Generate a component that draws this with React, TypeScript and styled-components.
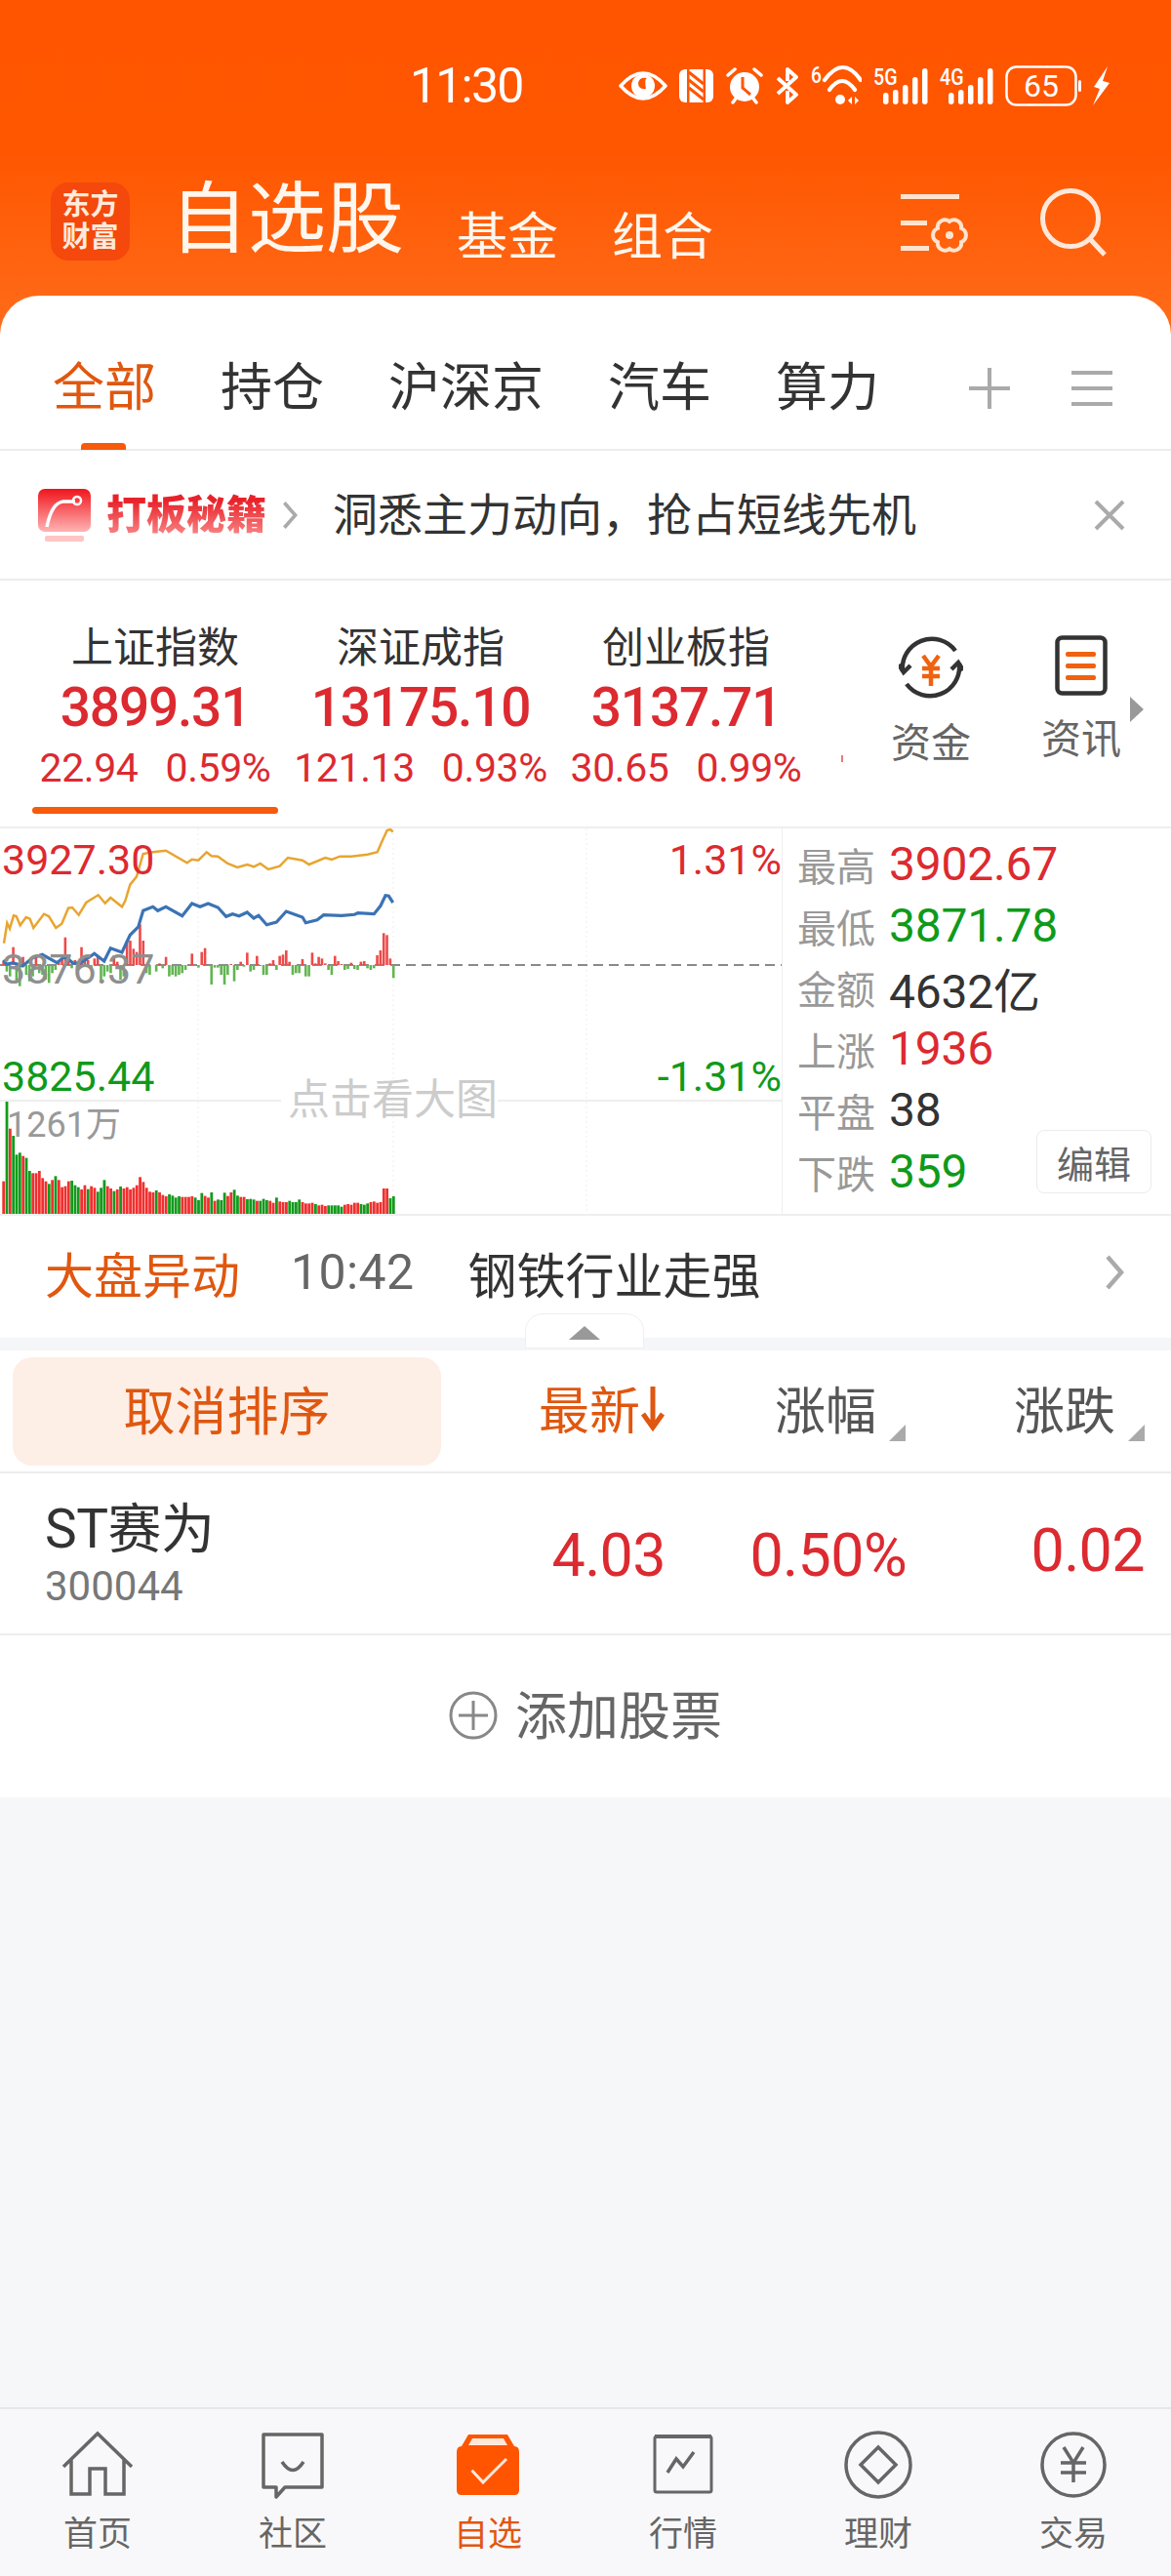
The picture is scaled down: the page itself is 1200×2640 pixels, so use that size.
import React from 'react';
import styled, { createGlobalStyle } from 'styled-components';

const ORANGE = '#e0570f';
const RED = '#dc2a30';
const GREEN = '#0f9a1a';

const GlobalStyle = createGlobalStyle`
  html, body {
    margin: 0;
    padding: 0;
    background: #f6f7f9;
  }
  * {
    box-sizing: border-box;
  }
  body {
    font-family: Roboto, "Noto Sans CJK SC", sans-serif;
  }
`;

const Page = styled.div`
  width: 1200px;
  height: 2640px;
  display: flex;
  flex-direction: column;
  overflow: hidden;
  background: linear-gradient(180deg, #ff5500 0, #ff5600 150px, #ff6c1a 345px) no-repeat;
  background-size: 100% 345px;
`;

const StatusBar = styled.div`
  height: 60px;
  margin-top: 58px;
  padding: 0 63px 0 420px;
  display: flex;
  align-items: center;
  color: #fff;
`;
const Clock = styled.span`
  font-size: 50px;
  line-height: 60px;
  letter-spacing: -1.8px;
`;
const StatusIcons = styled.div`
  margin-left: auto;
  display: flex;
  align-items: center;
  gap: 12px;
`;

const TitleBar = styled.div`
  height: 116px;
  margin-top: 69px;
  padding: 0 66px 0 52px;
  display: flex;
  align-items: flex-start;
  color: #fff6ee;
`;
const Logo = styled.div`
  width: 81px;
  height: 80px;
  border-radius: 18px;
  background: #f4480c;
  color: #ffeadb;
  font-size: 29px;
  font-weight: 700;
  line-height: 33px;
  text-align: center;
  padding-top: 7px;
`;
const Title = styled.div`
  margin-left: 41px;
  font-size: 80px;
  line-height: 76px;
`;
const SubTitle = styled.div<{ $gap: number }>`
  margin-left: ${(p) => p.$gap}px;
  margin-top: 30px;
  font-size: 52px;
  line-height: 54px;
`;
const TitleIcons = styled.div`
  margin-left: auto;
  display: flex;
  align-items: flex-start;
  gap: 72px;
`;

const Panel = styled.div`
  background: #fff;
  border-radius: 40px 40px 0 0;
`;

const TabBar = styled.div`
  height: 159px;
  padding: 32px 60px 0 54px;
  display: flex;
  align-items: center;
  gap: 66px;
  border-bottom: 2px solid #ececec;
`;
const Tab = styled.div<{ $active?: boolean }>`
  position: relative;
  font-size: 53px;
  line-height: 62px;
  color: ${(p) => (p.$active ? ORANGE : '#333')};
  &::after {
    content: '';
    display: ${(p) => (p.$active ? 'block' : 'none')};
    position: absolute;
    left: 29px;
    bottom: -32px;
    width: 46px;
    height: 7px;
    border-radius: 4px 4px 0 0;
    background: #f65a0a;
  }
`;
const TabTools = styled.div`
  margin-left: auto;
  display: flex;
  align-items: center;
  gap: 62px;
`;

const Banner = styled.div`
  height: 133px;
  padding: 0 46px 0 39px;
  display: flex;
  align-items: center;
  border-bottom: 2px solid #ececec;
`;
const BannerBrand = styled.span`
  margin-left: 16px;
  margin-right: 16px;
  font-size: 41px;
  font-weight: 900;
  line-height: 50px;
  background: linear-gradient(180deg, #e8222a 20%, #f98a8a 95%);
  -webkit-background-clip: text;
  background-clip: text;
  color: transparent;
`;
const BannerText = styled.span`
  margin-left: 36px;
  font-size: 46px;
  line-height: 60px;
  color: #333;
`;
const PushRight = styled.span`
  margin-left: auto;
  display: flex;
`;

const IndexSection = styled.div`
  position: relative;
  height: 252px;
  padding-left: 23px;
  display: flex;
  overflow: hidden;
`;
const IndexCard = styled.div`
  width: 272px;
  padding-top: 44px;
  display: flex;
  flex-direction: column;
  align-items: center;
`;
const IndexName = styled.div`
  font-size: 43px;
  line-height: 50px;
  color: #333;
`;
const IndexValue = styled.div`
  font-size: 55px;
  font-weight: 500;
  line-height: 72px;
  letter-spacing: -1.2px;
  color: ${RED};
`;
const IndexChange = styled.div`
  margin-top: 2px;
  display: flex;
  gap: 28px;
  font-size: 41px;
  line-height: 48px;
  letter-spacing: -0.4px;
  color: ${RED};
`;
const ActiveBar = styled.div<{ $active?: boolean }>`
  margin-top: 16px;
  width: 252px;
  height: 7px;
  border-radius: 4px;
  background: ${(p) => (p.$active ? '#f65a0a' : 'transparent')};
`;
const ShortcutList = styled.div`
  margin-left: 38px;
  display: flex;
`;
const Shortcut = styled.div`
  width: 154px;
  padding-top: 56px;
  display: flex;
  flex-direction: column;
  align-items: center;
  font-size: 41px;
  line-height: 50px;
  color: #666;
  svg {
    margin-bottom: 20px;
  }
`;
const MoreArrow = styled.div`
  position: absolute;
  left: 1158px;
  top: 119px;
  width: 14px;
  height: 26px;
  background: #999;
  clip-path: polygon(0 0, 100% 50%, 0 100%);
`;
const TinyMark = styled.div`
  position: absolute;
  left: 862px;
  top: 179px;
  width: 2px;
  height: 7px;
  background: #ea7a7a;
`;

const ChartSection = styled.div`
  height: 399px;
  display: flex;
  border-top: 2px solid #eeeeee;
  border-bottom: 2px solid #eeeeee;
`;
const ChartArea = styled.div`
  position: relative;
  width: 802px;
  height: 395px;
  flex: none;
  border-right: 1px solid #eeeeee;
`;
const ChartSvg = styled.svg`
  display: block;
`;
const ChartLabel = styled.span<{ $color: string; $top: number; $size?: number; $left?: number; $right?: number }>`
  position: absolute;
  top: ${(p) => p.$top}px;
  ${(p) => (p.$right !== undefined ? `right: ${p.$right}px;` : `left: ${p.$left ?? 2}px;`)}
  font-size: ${(p) => p.$size ?? 43}px;
  line-height: 50px;
  color: ${(p) => p.$color};
`;
const StatList = styled.div`
  flex: 1;
  padding: 5px 20px 0 15px;
`;
const StatRow = styled.div`
  height: 63px;
  display: flex;
  align-items: center;
`;
const StatName = styled.span`
  width: 94px;
  flex: none;
  font-size: 40px;
  color: #999;
`;
const StatValue = styled.span<{ $color: string }>`
  font-size: 48px;
  letter-spacing: -0.2px;
  color: ${(p) => p.$color};
`;
const EditButton = styled.div`
  margin-left: auto;
  margin-bottom: 20px;
  width: 118px;
  height: 65px;
  flex: none;
  border: 1px solid #ececec;
  border-radius: 8px;
  display: flex;
  align-items: center;
  justify-content: center;
  font-size: 38px;
  color: #666;
`;

const MoveRow = styled.div`
  height: 125px;
  padding: 0 48px 10px 46px;
  display: flex;
  align-items: center;
`;
const MoveTag = styled.span`
  font-size: 50px;
  color: ${ORANGE};
`;
const MoveTime = styled.span`
  margin-left: 52px;
  font-size: 50px;
  letter-spacing: 0.4px;
  color: #666;
`;
const MoveText = styled.span`
  margin-left: 55px;
  font-size: 50px;
  color: #333;
`;
const Band = styled.div`
  position: relative;
  height: 13px;
  background: #f5f6f8;
`;
const CollapseTab = styled.div`
  position: absolute;
  left: 538px;
  top: -25px;
  width: 122px;
  height: 36px;
  background: #fff;
  border: 1px solid #efefef;
  border-radius: 18px 18px 0 0;
  &::after {
    content: '';
    position: absolute;
    left: 44px;
    top: 12px;
    width: 32px;
    height: 14px;
    background: #999;
    clip-path: polygon(50% 0, 100% 100%, 0 100%);
  }
`;

const SortRow = styled.div`
  height: 126px;
  padding: 7px 27px 0 13px;
  display: flex;
  align-items: flex-start;
  border-bottom: 2px solid #ececec;
`;
const CancelCell = styled.div`
  flex: 1;
`;
const CancelButton = styled.div`
  width: 439px;
  height: 111px;
  padding-bottom: 8px;
  border-radius: 20px;
  background: #fdeee6;
  display: flex;
  align-items: center;
  justify-content: center;
  font-size: 53px;
  color: ${ORANGE};
`;
const SortCol = styled.div<{ $width: number; $active?: boolean }>`
  width: ${(p) => p.$width}px;
  height: 111px;
  padding-bottom: 8px;
  display: flex;
  justify-content: flex-end;
  align-items: center;
  font-size: 52px;
  color: ${(p) => (p.$active ? ORANGE : '#555')};
`;
const SortMark = styled.i`
  align-self: flex-end;
  margin: 0 0 17px 13px;
  width: 17px;
  height: 17px;
  background: #aaa;
  clip-path: polygon(100% 0, 100% 100%, 0 100%);
`;

const StockRow = styled.div`
  height: 166px;
  padding: 0 27px 0 46px;
  display: flex;
  align-items: center;
  border-bottom: 2px solid #ececec;
`;
const StockInfo = styled.div`
  flex: 1;
`;
const StockName = styled.div`
  font-size: 55px;
  line-height: 64px;
  letter-spacing: -0.5px;
  color: #333;
`;
const StockCode = styled.div`
  padding-top: 3px;
  font-size: 42px;
  line-height: 48px;
  color: #777;
`;
const StockValue = styled.div<{ $width: number; $lift?: number }>`
  width: ${(p) => p.$width}px;
  padding-top: 4px;
  padding-bottom: ${(p) => p.$lift ?? 0}px;
  text-align: right;
  font-size: 61px;
  line-height: 70px;
  letter-spacing: -0.6px;
  color: ${RED};
`;

const AddRow = styled.div`
  height: 166px;
  padding-bottom: 2px;
  display: flex;
  align-items: center;
  justify-content: center;
  gap: 18px;
  font-size: 53px;
  color: #666;
  span {
    padding-bottom: 6px;
  }
`;

const Filler = styled.div`
  flex: 1;
  background: #f6f7f9;
`;

const BottomNav = styled.div`
  height: 173px;
  padding-top: 21px;
  display: grid;
  grid-template-columns: repeat(6, 1fr);
  background: #f8f8fa;
  border-top: 2px solid #e6e6e8;
`;
const NavItem = styled.div<{ $active?: boolean }>`
  display: flex;
  flex-direction: column;
  align-items: center;
  font-size: 35px;
  line-height: 44px;
  color: ${(p) => (p.$active ? ORANGE : '#666')};
  svg {
    margin-bottom: 14px;
  }
`;

const goldLine =
  '12,380 22,318 30,335 42,295 50,297 62,325 80,300 92,305 103,333 135,290 150,297 172,333 190,320 210,272 222,270 242,293 265,255 302,232 323,257 340,240 375,268 385,250 400,200 420,175 440,105 470,100 510,95 575,133 590,122 610,125 635,100 650,112 670,113 700,135 730,147 760,138 780,145 800,135 825,153 860,143 885,117 930,125 950,138 1000,117 1020,123 1045,113 1080,113 1130,107 1160,100 1175,65 1190,33 1200,30 1208,38';
const blueLine =
  '10,432 20,445 40,440 70,450 100,425 130,415 175,440 200,420 225,442 250,440 290,412 320,435 340,395 375,408 400,355 425,330 440,280 470,268 485,280 510,268 560,296 590,258 615,268 640,258 670,270 695,298 715,290 735,296 760,285 780,303 795,295 820,323 850,315 880,282 930,300 940,317 975,308 995,293 1050,295 1090,292 1100,287 1150,290 1170,265 1185,233 1195,235 1208,255';

// one entry per bar, measured on a 3x crop
const flowBars = [
  10, -20, -35, 55, -55, -65, 25, -30, -50, -35, 25, -25, -30, -45, -55, -25, -15, 10, 20, 85, 25, -10, 15, -10, 55, 30,
  15, -10, 20, 30, -45, -35, -20, -25, 30, 10, -45, -35, 75, 75, 50, 40, 125, 75, -25, -30, 0, -20, 5, -10, 25, -35, -30,
  -35, -30, -25, -15, 0, 35, 0, -8, 40, 52, 0, -60, -8, -8, -30, -60, -30, 3, -50, -15, 10, -5, 38, -20, -15, 28, -3, -30,
  -30, 5, 15, -15, 28, 32, 45, 10, -30, -25, -25, 18, -35, -35, 38, 5, 25, 20, 5, -15, -30, 28, 12, 3, -15, -12, 7, -12,
  -15, 10, 12, -10, -15, -10, 30, 45, 98, 92, 20, -40,
];
const volumeBars = [
  100, -345, 262, -240, -182, -188, 178, -172, -132, 125, 125, 132, 110, 100, -92, 104, -116, 104, 82, 85, 100, -102, -88,
  -82, 75, 88, -76, 85, 80, -68, -80, -104, 85, 78, -70, 75, -84, 78, 82, 75, 80, 88, 113, 98, 80, 68, 66, -72, 66, 58, 54,
  -60, -56, -50, -54, 52, 52, 52, 54, -50, -42, -64, 55, 50, -66, 40, -44, -42, -65, 55, 66, -74, -56, 52, 52, -45, -46,
  -44, 40, -40, -46, -42, 40, 34, -50, 38, 36, 36, -40, -36, -36, -44, 36, 32, 32, 34, -30, 26, 28, 24, -26, -26, -26, -26,
  -22, 28, 30, 28, 34, 34, -30, -28, -32, 36, 38, 34, 36, 78, 78, -48, -54,
];

const scaled = (line: string) =>
  line
    .split(' ')
    .map((pair) => {
      const [x, y] = pair.split(',').map(Number);
      return `${(x / 3).toFixed(1)},${(y / 3 - 9).toFixed(1)}`;
    })
    .join(' ');

const MID_Y = 140;

const MiniChart = () => (
  <ChartSvg width={801} height={395} viewBox="0 0 801 395">
    <g stroke="#eeeeee" strokeWidth={1} strokeDasharray="2 3">
      <line x1={203} y1={0} x2={203} y2={395} />
      <line x1={403} y1={0} x2={403} y2={395} />
      <line x1={601} y1={0} x2={601} y2={395} />
    </g>
    <line x1={0} y1={279} x2={288} y2={279} stroke="#eeeeee" strokeWidth={2} />
    <line x1={510} y1={279} x2={801} y2={279} stroke="#eeeeee" strokeWidth={2} />
    <line x1={0} y1={MID_Y} x2={801} y2={MID_Y} stroke="#8a8a8a" strokeWidth={2} strokeDasharray="10 6" />
    {flowBars.map((v, i) => (
      <rect
        key={i}
        x={2.3 + i * 3.33}
        y={v > 0 ? MID_Y - v / 3 : MID_Y}
        width={2.6}
        height={Math.abs(v) / 3}
        fill={v > 0 ? '#ee4a4a' : '#62b552'}
      />
    ))}
    {volumeBars.map((v, i) => (
      <rect
        key={i}
        x={2.3 + i * 3.33}
        y={395 - Math.abs(v) / 3}
        width={2.8}
        height={Math.abs(v) / 3}
        fill={v > 0 ? '#f0302f' : '#139a1c'}
      />
    ))}
    <polyline points={scaled(goldLine)} fill="none" stroke="#e8a530" strokeWidth={2.5} />
    <polyline points={scaled(blueLine)} fill="none" stroke="#3b73b5" strokeWidth={3.2} />
  </ChartSvg>
);

const EyeIcon = () => (
  <svg width={50} height={36} viewBox="0 0 50 36">
    <path d="M2 18 Q25 -8 48 18 Q25 44 2 18Z" fill="none" stroke="#fff" strokeWidth={3.5} strokeLinejoin="round" />
    <circle cx={25} cy={18} r={12} fill="#fff" />
    <path d="M20 15 Q20 22 28 21 Q26 11 29 10 Q21 9 20 15Z" fill="#ff5500" />
  </svg>
);
const NfcIcon = () => (
  <svg width={35} height={36} viewBox="0 0 35 36">
    <rect x={0} y={1} width={35} height={34} rx={6} fill="#fff" />
    <rect x={8} y={1} width={2.5} height={34} fill="#ff5500" />
    <rect x={24.5} y={1} width={2.5} height={34} fill="#ff5500" />
    <path d="M10 4 L25 16 M10 12 L25 24 M10 20 L25 32" stroke="#ff5500" strokeWidth={3} />
  </svg>
);
const AlarmIcon = () => (
  <svg width={40} height={38} viewBox="0 0 40 38">
    <circle cx={20} cy={20} r={15} fill="#fff" />
    <path d="M18 10 V21 L26 28" fill="none" stroke="#ff5500" strokeWidth={3} />
    <path d="M3 8 L10 2 M37 8 L30 2 M8 36 L11 32 M32 36 L29 32" stroke="#fff" strokeWidth={3.5} strokeLinecap="round" />
  </svg>
);
const BluetoothIcon = () => (
  <svg width={24} height={38} viewBox="0 0 24 38">
    <path d="M2 27 L21 10 L12 2 V14 M2 11 L21 28 L12 36 V24" fill="none" stroke="#fff" strokeWidth={3.8} strokeLinejoin="round" />
  </svg>
);
const WifiIcon = () => (
  <svg width={52} height={50} viewBox="0 -5 52 50">
    <text transform="scale(0.8 1)" x={0} y={17} fontSize={24} fontWeight={500} fill="#fff" fontFamily="Roboto">6</text>
    <path d="M14 14 Q33 -12 51 14 M19 24 Q32 6 45 24" fill="none" stroke="#fff" strokeWidth={4.2} strokeLinecap="round" />
    <circle cx={30} cy={34} r={5} fill="#fff" />
    <path d="M42 31 L38 35 L42 39Z M45 31 L49 35 L45 39Z" fill="#fff" />
  </svg>
);
const SignalIcon = ({ label, width }: { label: string; width: number }) => (
  <svg width={width} height={50} viewBox={`0 -6 ${width} 50`}>
    <text transform="scale(0.82 1)" x={0} y={18} fontSize={24} fontWeight={500} fill="#fff" fontFamily="Roboto">{label}</text>
    {[12, 15, 20, 28, 37].map((h, i) => (
      <rect key={i} x={width - 46 + i * 10} y={38 - h} width={5.5} height={h} rx={2.7} fill="#fff" />
    ))}
  </svg>
);
const BatteryIcon = () => (
  <svg width={78} height={42} viewBox="0 0 78 42">
    <rect x={1.5} y={1.5} width={71} height={39} rx={10} fill="none" stroke="#fff" strokeWidth={2.5} />
    <text x={37} y={32} fontSize={32} textAnchor="middle" fill="#fff" fontFamily="Roboto">65</text>
    <rect x={75} y={15} width={3} height={12} rx={1.5} fill="#fff" />
  </svg>
);
const BoltIcon = () => (
  <svg width={17} height={40} viewBox="0 0 17 40">
    <path d="M15 0 L1 21 L7 23 L0 40 L17 17 L10 15 Z" fill="#fff" />
  </svg>
);

const FilterIcon = () => (
  <svg width={72} height={62} viewBox="0 0 72 62" style={{ marginTop: 11 }}>
    <g fill="#ffe3cf">
      <rect x={1} y={1} width={60} height={5} />
      <rect x={1} y={28} width={27} height={5} />
      <rect x={1} y={54} width={29} height={5} />
    </g>
    <path
      transform="translate(51 43)"
      d="M12.1 -7 A7.5 7.5 0 0 1 12.1 7 A7.5 7.5 0 0 1 0 14 A7.5 7.5 0 0 1 -12.1 7 A7.5 7.5 0 0 1 -12.1 -7 A7.5 7.5 0 0 1 0 -14 A7.5 7.5 0 0 1 12.1 -7Z"
      fill="none"
      stroke="#ffe3cf"
      strokeWidth={4}
    />
    <circle cx={51} cy={43} r={4} fill="#ffe3cf" />
  </svg>
);
const SearchIcon = () => (
  <svg width={68} height={70} viewBox="0 0 68 70" style={{ marginTop: 6 }}>
    <circle cx={31} cy={31} r={28.5} fill="none" stroke="#ffe8da" strokeWidth={5} />
    <path d="M52 53 L66 68" stroke="#ffe8da" strokeWidth={5} />
  </svg>
);

const PlusIcon = () => (
  <svg width={44} height={44} viewBox="0 0 44 44">
    <path d="M22 1 V43 M1 22 H43" stroke="#aaa" strokeWidth={4} />
  </svg>
);
const MenuIcon = () => (
  <svg width={42} height={38} viewBox="0 0 42 38">
    <path d="M0 3 H42 M0 19 H42 M0 35 H42" stroke="#aaa" strokeWidth={4} />
  </svg>
);
const BoardIcon = () => (
  <svg width={54} height={54} viewBox="0 0 54 54">
    <defs>
      <linearGradient id="board" x1="0" y1="0" x2="0" y2="1">
        <stop offset="0" stopColor="#f0141c" />
        <stop offset="1" stopColor="#ffb4b4" />
      </linearGradient>
    </defs>
    <rect x={0} y={0} width={54} height={44} rx={7} fill="url(#board)" />
    <rect x={7} y={48} width={40} height={6} rx={2} fill="#ffc4c4" />
    <path d="M9 39 Q14 14 26 13 L38 13" fill="none" stroke="#fff" strokeWidth={3.5} />
    <circle cx={40} cy={12} r={4} fill="none" stroke="#fff" strokeWidth={2.5} />
  </svg>
);
const ChevronIcon = ({ color, w, h }: { color: string; w: number; h: number }) => (
  <svg width={w} height={h} viewBox="0 0 20 36">
    <path d="M3 2 L17 18 L3 34" fill="none" stroke={color} strokeWidth={4.5} />
  </svg>
);
const CloseIcon = () => (
  <svg width={34} height={34} viewBox="0 0 34 34">
    <path d="M3 3 L31 31 M31 3 L3 31" stroke="#aaa" strokeWidth={4} />
  </svg>
);
const FundIcon = () => (
  <svg width={66} height={66} viewBox="0 0 66 66">
    <path d="M4 37 A30 30 0 0 1 58 16 M62 29 A30 30 0 0 1 8 50" fill="none" stroke="#333" strokeWidth={4.5} />
    <path d="M0 30 L5 38 L12 31 M66 36 L61 28 L54 35" fill="none" stroke="#333" strokeWidth={4.5} />
    <path d="M25 21 L33 32 L41 21 M24 34 H42 M24 42 H42 M33 32 V52" fill="none" stroke="#f0620f" strokeWidth={4.5} />
  </svg>
);
const NewsIcon = () => (
  <svg width={54} height={62} viewBox="0 0 54 62">
    <rect x={2.5} y={2.5} width={49} height={57} rx={5} fill="none" stroke="#333" strokeWidth={4.5} />
    <g fill="#f0620f">
      <rect x={11} y={17} width={31} height={5} rx={2} />
      <rect x={11} y={29} width={31} height={5} rx={2} />
      <rect x={11} y={41} width={31} height={5} rx={2} />
    </g>
  </svg>
);
const AddIcon = () => (
  <svg width={50} height={50} viewBox="0 0 50 50">
    <circle cx={25} cy={25} r={23} fill="none" stroke="#888" strokeWidth={3} />
    <path d="M25 10 V40 M10 25 H40" stroke="#888" strokeWidth={3} />
  </svg>
);
const DownArrow = () => (
  <svg width={26} height={48} viewBox="0 0 26 48">
    <path d="M13 2 V44 M3 30 L13 44 L23 30" fill="none" stroke={ORANGE} strokeWidth={5} />
  </svg>
);

const NAV_STROKE = '#666';
const HomeIcon = () => (
  <svg width={80} height={72} viewBox="0 0 80 72">
    <path
      d="M5 38 L40 4 L75 38 M13 30 V66 H32 V40 H48 V66 H67 V30"
      fill="none"
      stroke={NAV_STROKE}
      strokeWidth={3.5}
    />
  </svg>
);
const CommunityIcon = () => (
  <svg width={80} height={72} viewBox="0 0 80 72">
    <path
      d="M10 5 H70 V59 H32 L23 69 V59 H10 Z"
      fill="none"
      stroke={NAV_STROKE}
      strokeWidth={3.5}
      strokeLinejoin="round"
    />
    <path d="M29 33 Q40 50 51 33" fill="none" stroke={NAV_STROKE} strokeWidth={3.5} />
  </svg>
);
const WatchIcon = () => (
  <svg width={80} height={72} viewBox="0 0 80 72">
    <path d="M13 17 L20 5 H60 L67 17Z" fill="#ff5500" />
    <path d="M20 16 L24 9 H56 L60 16Z" fill="#ffe8da" />
    <path d="M8 23 Q8 17 13 17 H67 Q72 17 72 23 V62 Q72 67 67 67 H13 Q8 67 8 62Z" fill="#ff5500" />
    <path d="M23.5 41.7 L35 54 L59 30" fill="none" stroke="#ffe8da" strokeWidth={3} />
  </svg>
);
const MarketIcon = () => (
  <svg width={80} height={72} viewBox="0 0 80 72">
    <rect x={11} y={7} width={58} height={57} rx={2} fill="none" stroke={NAV_STROKE} strokeWidth={3} />
    <rect x={11} y={5} width={58} height={4} fill={NAV_STROKE} />
    <path d="M24 44 L33 30 L40 38 L51 23" fill="none" stroke={NAV_STROKE} strokeWidth={3.5} />
  </svg>
);
const WealthIcon = () => (
  <svg width={80} height={72} viewBox="0 0 80 72">
    <circle cx={40} cy={36} r={33} fill="none" stroke={NAV_STROKE} strokeWidth={3.5} />
    <path d="M40 18 L58 36 L40 54 L22 36Z" fill="none" stroke={NAV_STROKE} strokeWidth={3.5} />
  </svg>
);
const TradeIcon = () => (
  <svg width={80} height={72} viewBox="0 0 80 72">
    <circle cx={40} cy={36} r={32} fill="none" stroke={NAV_STROKE} strokeWidth={3.5} />
    <path d="M30 18 L40 34 L50 18 M27 34 H53 M27 44 H53 M40 34 V54" fill="none" stroke={NAV_STROKE} strokeWidth={3.5} />
  </svg>
);

const indices = [
  { name: '上证指数', value: '3899.31', diff: '22.94', pct: '0.59%', active: true },
  { name: '深证成指', value: '13175.10', diff: '121.13', pct: '0.93%' },
  { name: '创业板指', value: '3137.71', diff: '30.65', pct: '0.99%' },
];

const stats = [
  { name: '最高', value: '3902.67', color: RED },
  { name: '最低', value: '3871.78', color: GREEN },
  { name: '金额', value: '4632亿', color: '#333' },
  { name: '上涨', value: '1936', color: RED },
  { name: '平盘', value: '38', color: '#333' },
];

const navItems = [
  { label: '首页', icon: <HomeIcon /> },
  { label: '社区', icon: <CommunityIcon /> },
  { label: '自选', icon: <WatchIcon />, active: true },
  { label: '行情', icon: <MarketIcon /> },
  { label: '理财', icon: <WealthIcon /> },
  { label: '交易', icon: <TradeIcon /> },
];

const App: React.FC = () => {
  return (
    <Page>
      <GlobalStyle />
      <StatusBar>
        <Clock>11:30</Clock>
        <StatusIcons>
          <EyeIcon />
          <NfcIcon />
          <AlarmIcon />
          <BluetoothIcon />
          <WifiIcon />
          <SignalIcon label="5G" width={56} />
          <SignalIcon label="4G" width={55} />
          <BatteryIcon />
          <BoltIcon />
        </StatusIcons>
      </StatusBar>
      <TitleBar>
        <Logo>
          东方
          <br />
          财富
        </Logo>
        <Title>自选股</Title>
        <SubTitle $gap={54}>基金</SubTitle>
        <SubTitle $gap={55}>组合</SubTitle>
        <TitleIcons>
          <FilterIcon />
          <SearchIcon />
        </TitleIcons>
      </TitleBar>

      <Panel>
        <TabBar>
          <Tab $active>全部</Tab>
          <Tab>持仓</Tab>
          <Tab>沪深京</Tab>
          <Tab>汽车</Tab>
          <Tab>算力</Tab>
          <TabTools>
            <PlusIcon />
            <MenuIcon />
          </TabTools>
        </TabBar>

        <Banner>
          <BoardIcon />
          <BannerBrand>打板秘籍</BannerBrand>
          <ChevronIcon color="#aaa" w={16} h={30} />
          <BannerText>洞悉主力动向，抢占短线先机</BannerText>
          <PushRight>
            <CloseIcon />
          </PushRight>
        </Banner>

        <IndexSection>
          {indices.map((item) => (
            <IndexCard key={item.name}>
              <IndexName>{item.name}</IndexName>
              <IndexValue>{item.value}</IndexValue>
              <IndexChange>
                <span>{item.diff}</span>
                <span>{item.pct}</span>
              </IndexChange>
              <ActiveBar $active={item.active} />
            </IndexCard>
          ))}
          <ShortcutList>
            <Shortcut>
              <FundIcon />
              资金
            </Shortcut>
            <Shortcut>
              <NewsIcon />
              资讯
            </Shortcut>
          </ShortcutList>
          <TinyMark />
          <MoreArrow />
        </IndexSection>

        <ChartSection>
          <ChartArea>
            <MiniChart />
            <ChartLabel $color={RED} $top={7}>3927.30</ChartLabel>
            <ChartLabel $color="#8f8f8f" $top={119}>3876.37</ChartLabel>
            <ChartLabel $color={GREEN} $top={229}>3825.44</ChartLabel>
            <ChartLabel $color="#999" $top={279} $size={36} $left={7}>1261万</ChartLabel>
            <ChartLabel $color="#ccc" $top={253} $left={295}>点击看大图</ChartLabel>
            <ChartLabel $color={RED} $top={7} $right={0}>1.31%</ChartLabel>
            <ChartLabel $color={GREEN} $top={229} $right={0}>-1.31%</ChartLabel>
          </ChartArea>
          <StatList>
            {stats.map((s) => (
              <StatRow key={s.name}>
                <StatName>{s.name}</StatName>
                <StatValue $color={s.color}>{s.value}</StatValue>
              </StatRow>
            ))}
            <StatRow>
              <StatName>下跌</StatName>
              <StatValue $color={GREEN}>359</StatValue>
              <EditButton>编辑</EditButton>
            </StatRow>
          </StatList>
        </ChartSection>

        <MoveRow>
          <MoveTag>大盘异动</MoveTag>
          <MoveTime>10:42</MoveTime>
          <MoveText>钢铁行业走强</MoveText>
          <PushRight>
            <ChevronIcon color="#aaa" w={20} h={36} />
          </PushRight>
        </MoveRow>
        <Band>
          <CollapseTab />
        </Band>

        <SortRow>
          <CancelCell>
            <CancelButton>取消排序</CancelButton>
          </CancelCell>
          <SortCol $width={230} $active>
            最新
            <DownArrow />
          </SortCol>
          <SortCol $width={246}>
            涨幅
            <SortMark />
          </SortCol>
          <SortCol $width={245}>
            涨跌
            <SortMark />
          </SortCol>
        </SortRow>

        <StockRow>
          <StockInfo>
            <StockName>ST赛为</StockName>
            <StockCode>300044</StockCode>
          </StockInfo>
          <StockValue $width={230}>4.03</StockValue>
          <StockValue $width={247}>0.50%</StockValue>
          <StockValue $width={244} $lift={10}>0.02</StockValue>
        </StockRow>

        <AddRow>
          <AddIcon />
          <span>添加股票</span>
        </AddRow>
      </Panel>

      <Filler />

      <BottomNav>
        {navItems.map((item) => (
          <NavItem key={item.label} $active={item.active}>
            {item.icon}
            {item.label}
          </NavItem>
        ))}
      </BottomNav>
    </Page>
  );
};

export default App;
